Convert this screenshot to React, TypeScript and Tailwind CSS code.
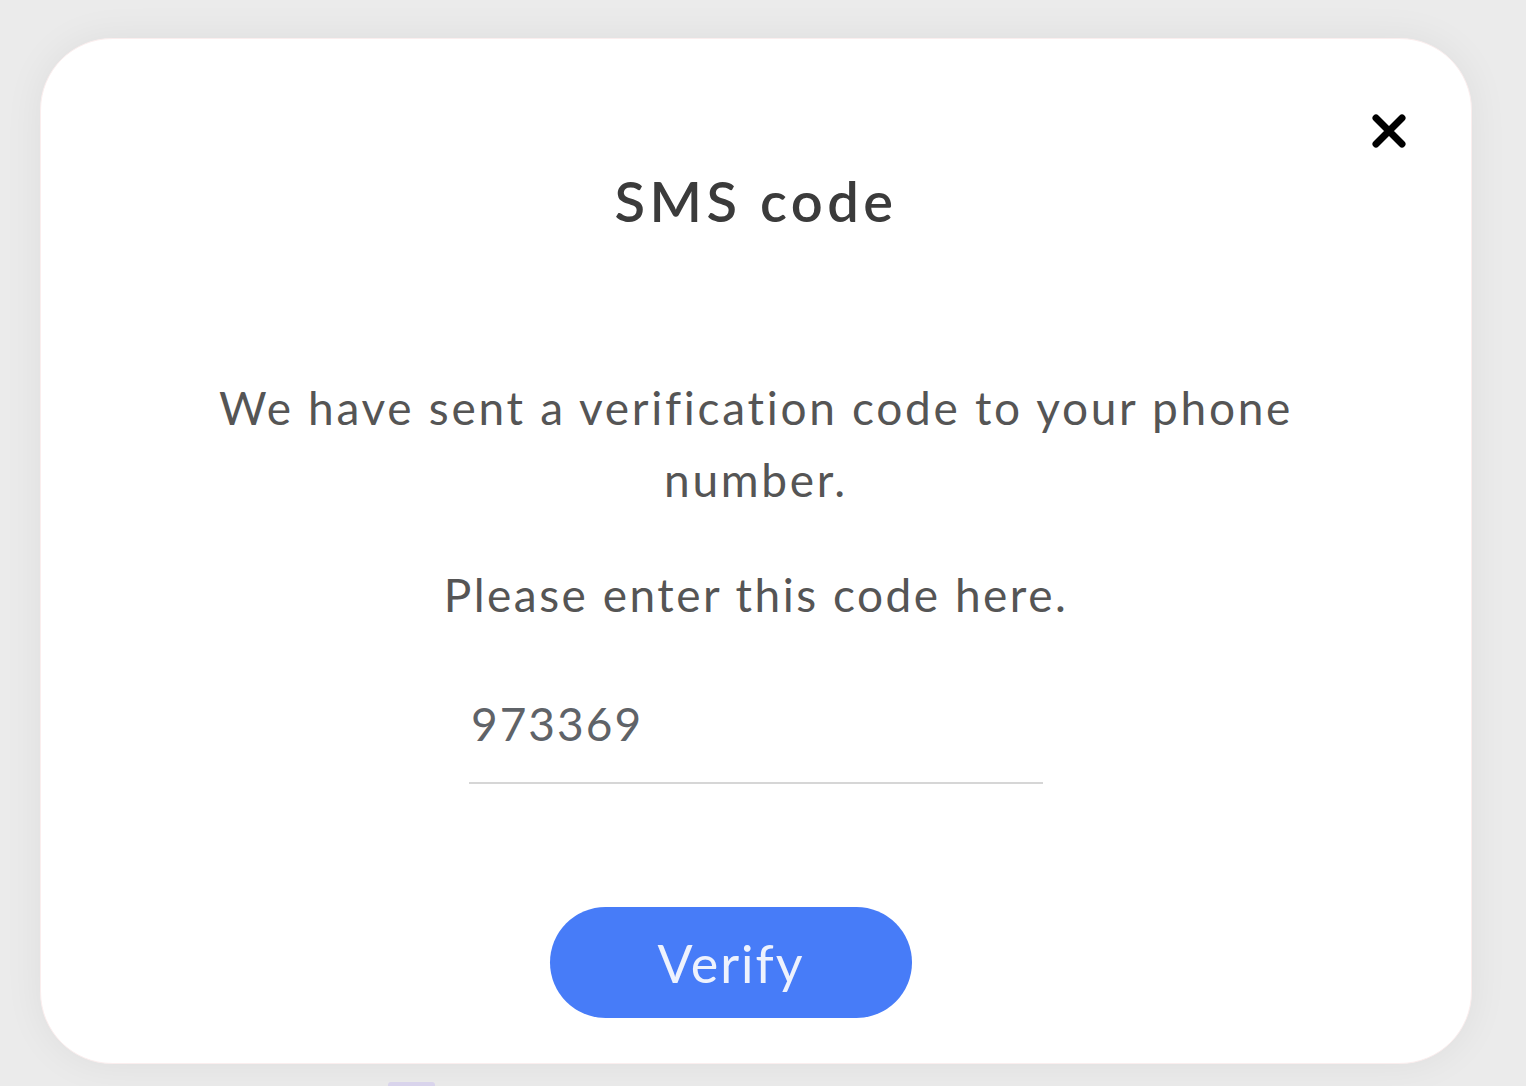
export default function App() {
  return (
    <div className="relative h-[1086px] w-[1526px] overflow-hidden bg-[#ebebeb] pl-[40px] pt-[38px]" style={{ fontFamily: "Lato, 'Noto Sans', sans-serif" }}>
      <div className="relative flex h-[1026px] w-[1432px] flex-col items-center rounded-[72px] border border-[#fbeeee] bg-white shadow-[0_0_40px_rgba(0,0,0,0.06)]">
        <button className="absolute right-[64px] top-[74px]">
          <svg width="36" height="36" viewBox="0 0 36 36" fill="none" stroke="#000" strokeWidth="7" strokeLinecap="round">
            <path d="M5 5 L31 31 M31 5 L5 31" />
          </svg>
        </button>

        <h1 className="mt-[128px] text-[56px] font-semibold leading-[68px] tracking-[4.5px] text-[#3b3b3b]">SMS code</h1>

        <p className="mt-[137px] w-[1120px] text-center text-[46px] leading-[72px] tracking-[2.7px] text-[#555555]">
          We have sent a verification code to your phone number.
        </p>

        <p className="mt-[43px] text-center text-[46px] leading-[72px] tracking-[2.5px] text-[#555555]">Please enter this code here.</p>

        <div className="mt-[63px] w-[574px] border-b-2 border-[#d6d6d6] pb-[28px]">
          <input
            type="text"
            defaultValue="973369"
            className="w-full bg-transparent px-[2px] text-[46px] leading-[60px] tracking-[2px] text-[#5f6368] outline-none"
          />
        </div>

        <button className="ml-[-50px] mt-[123px] h-[111px] w-[362px] rounded-full bg-[#477cf8] text-[52px] tracking-[2px] text-[#eef2fd]">
          Verify
        </button>
      </div>
      <div className="absolute bottom-0 left-[388px] h-[4px] w-[47px] rounded-t-[3px] bg-[#d9d4ec]" />
    </div>
  );
}
